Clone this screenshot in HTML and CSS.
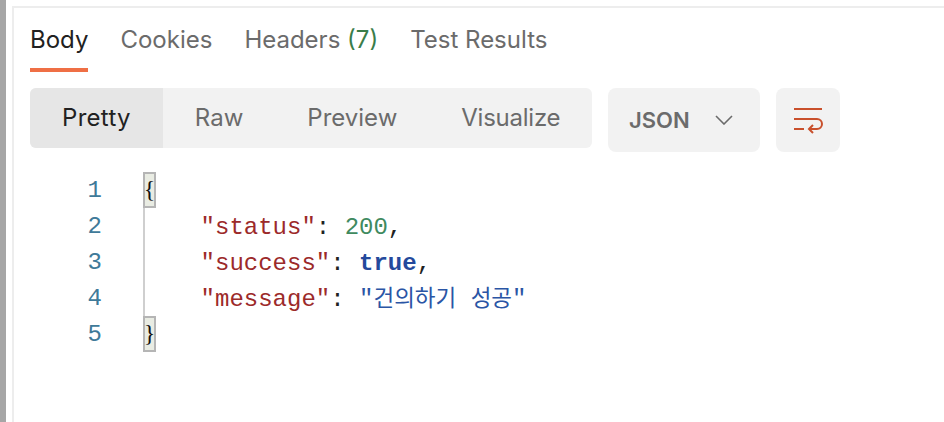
FILE: index.html
```html
<!DOCTYPE html>
<html lang="ko">
<head>
<meta charset="utf-8">
<title>Response</title>
<link rel="stylesheet" href="styles.css">
</head>
<body>
<div class="app">
  <div class="rail"></div>
  <div class="pane">
    <nav class="tabs">
      <span class="tab active">Body</span>
      <span class="tab">Cookies</span>
      <span class="tab">Headers <em class="count">(7)</em></span>
      <span class="tab">Test Results</span>
    </nav>
    <div class="toolbar">
      <div class="modes">
        <span class="mode selected">Pretty</span>
        <span class="mode">Raw</span>
        <span class="mode">Preview</span>
        <span class="mode tight">Visualize</span>
      </div>
      <div class="select">
        <span>JSON</span>
        <svg class="chev" width="18" height="10" viewBox="0 0 18 10" fill="none"><path d="M1 1l8 8 8-8" stroke="#6b6b6b" stroke-width="1.6"/></svg>
      </div>
      <div class="wrap">
        <svg width="30" height="28" viewBox="0 0 30 28" fill="none" stroke="#c9502c" stroke-width="2"><path d="M1 3h28M1 13h23a5 5 0 0 1 0 10h-8M1 23h10M20 19l-4 4 4 4"/></svg>
      </div>
    </div>
    <div class="code">
      <div class="line"><span class="num">1</span><span class="src"><span class="brace">{</span></span></div>
      <div class="line"><span class="num">2</span><span class="src guide"><span class="txt">    <span class="key">"status"</span>: <span class="n">200</span>,</span></span></div>
      <div class="line"><span class="num">3</span><span class="src guide"><span class="txt">    <span class="key">"success"</span>: <span class="b">true</span>,</span></span></div>
      <div class="line"><span class="num">4</span><span class="src guide"><span class="txt">    <span class="key">"message"</span>: <span class="s">"<span class="ko">건의하기</span> <span class="ko">성공</span>"</span></span></span></div>
      <div class="line"><span class="num">5</span><span class="src"><span class="brace">}</span></span></div>
    </div>
  </div>
</div>
</body>
</html>
```
FILE: styles.css
```css
* { box-sizing: border-box; }
html, body { margin: 0; height: 100%; background: #fff; }
body { overflow: hidden; font-family: Inter, "Liberation Sans", sans-serif; }
.app { display: flex; width: 944px; height: 422px; }
.rail { width: 6px; background: #a6a6a6; }
.pane {
  flex: 1;
  margin-left: 6px;
  margin-top: 6px;
  padding-left: 16px;
  border-left: 2px solid #ededed;
  border-top: 2px solid #ededed;
}
.tabs { display: flex; gap: 32px; height: 64px; }
.tab {
  height: 64px;
  padding-top: 17px;
  font-size: 24px;
  line-height: 30px;
  color: #6b6b6b;
}
.tab.active { color: #212121; border-bottom: 4px solid #ef6f45; }
.count { font-style: normal; color: #3a7d4a; }
.toolbar { display: flex; align-items: flex-start; gap: 16px; margin-top: 16px; }
.modes { display: flex; width: 562px; height: 60px; background: #f2f2f2; border-radius: 6px; overflow: hidden; }
.mode { padding: 0 32px; font-size: 24px; line-height: 59px; color: #6b6b6b; }
.mode.selected { background: #e6e6e6; color: #212121; letter-spacing: 0.3px; }
.mode.tight { letter-spacing: -0.25px; }
.select {
  display: flex;
  align-items: center;
  width: 152px;
  height: 64px;
  padding-left: 21px;
  background: #f2f2f2;
  border-radius: 8px;
  font-size: 22px;
  font-weight: 600;
  color: #6b6b6b;
}
.chev { margin-left: 25px; }
.wrap {
  display: flex;
  align-items: center;
  justify-content: center;
  width: 64px;
  height: 64px;
  background: #f2f2f2;
  border-radius: 8px;
}
.code { margin-top: 20px; font-family: "Liberation Mono", monospace; font-size: 24px; line-height: 36px; }
.line { display: flex; height: 36px; }
.num {
  width: 72px;
  padding-top: 1px;
  text-align: right;
  color: #3f7a99;
}
.src { margin-left: 41px; white-space: pre; color: #212121; }
.guide { box-shadow: inset 2px 0 0 #cfcfcf; }
.txt { display: block; padding-top: 2px; }
.brace {
  display: block;
  width: 13px;
  height: 36px;
  line-height: 35px;
  text-align: center;
  background: #e9ece3;
  outline: 2px solid #b5b5b5;
  outline-offset: -2px;
  font-family: "Liberation Serif", serif;
  color: #111;
}
.key { color: #9c2a2a; }
.n { color: #3f8a5f; }
.b { color: #24499c; font-weight: 700; }
.s { color: #2a55a5; }
.ko { font-family: "Noto Sans CJK KR", sans-serif; font-size: 22.5px; line-height: 0; }
```
